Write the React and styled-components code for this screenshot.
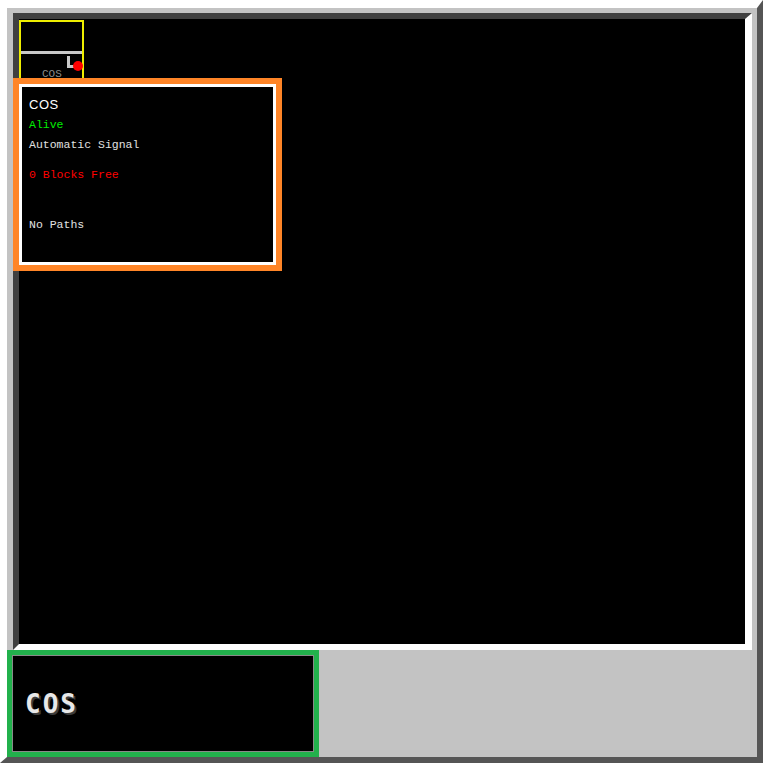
import React from 'react';
import styled, {createGlobalStyle} from 'styled-components';

const Global = createGlobalStyle`
	html, body {
		margin: 0;
		padding: 0;
		background: #ffffff;
	}
`;

const Window = styled.div`
	width: 763px;
	height: 763px;
	box-sizing: border-box;
	border-top: 8px solid #ffffff;
	border-left: 7px solid #ffffff;
	border-right: 6px solid #555555;
	border-bottom: 6px solid #555555;
	background: #c3c3c3;
	display: flex;
	flex-direction: column;
`;

const Top = styled.div`
	padding: 5px 5px 0 6px;
`;

const Sunken = styled.div`
	width: 739px;
	height: 637px;
	box-sizing: border-box;
	border-top: 6px solid #404040;
	border-left: 6px solid #404040;
	border-right: 7px solid #ffffff;
	border-bottom: 6px solid #ffffff;
`;

const Canvas = styled.div`
	position: relative;
	width: 100%;
	height: 100%;
	background: #000000;
`;

// signal node on the track diagram
const Node = styled.div`
	position: absolute;
	left: 0;
	top: 1px;
	width: 65px;
	height: 62px;
	box-sizing: border-box;
	border: 2px solid #eeee00;
	display: flex;
	flex-direction: column;
	padding-top: 29px;
`;

const Track = styled.div`
	height: 3px;
	background: #c8c8c8;
`;

const Head = styled.div`
	display: flex;
	justify-content: flex-end;
	align-items: flex-end;
	padding-top: 2px;
	height: 12px;
`;

const Lamp = styled.div`
	width: 8px;
	height: 12px;
	box-sizing: border-box;
	border-left: 3px solid #c8c8c8;
	border-bottom: 3px solid #c8c8c8;
`;

const Dot = styled.div`
	width: 10px;
	height: 10px;
	margin: 0 -1px -3px -2px;
	border-radius: 50%;
	background: #ff0000;
`;

const NodeLabel = styled.div`
	padding-left: 21px;
	font-family: "Liberation Mono", monospace;
	font-size: 11px;
	line-height: 12px;
	color: #8c8c8c;
`;

const Popup = styled.div`
	position: absolute;
	left: -6px;
	top: 59px;
	width: 269px;
	height: 193px;
	box-sizing: border-box;
	border: 6px solid #ff8527;
	z-index: 2;
`;

const PopupInner = styled.div`
	height: 100%;
	box-sizing: border-box;
	border: 3px solid #ffffff;
	background: #000000;
	padding: 8px 0 0 7px;
`;

const Title = styled.div`
	font-family: "Liberation Sans", Arial, sans-serif;
	font-size: 13px;
	letter-spacing: 0.5px;
	line-height: 20px;
	color: #ffffff;
`;

const Line = styled.div`
	font-family: "Liberation Mono", monospace;
	font-size: 11.5px;
	line-height: 20px;
	color: ${p => p.color || '#e0e0e0'};
	margin-top: ${p => p.gap || 0}px;
`;

const Bottom = styled.div`
	display: flex;
	height: 107px;
`;

const Status = styled.div`
	width: 312px;
	height: 107px;
	box-sizing: border-box;
	border: 5px solid #22b14c;
`;

const StatusInner = styled.div`
	height: 100%;
	box-sizing: border-box;
	border: 1px solid #8a8a8a;
	background: #000000;
	display: flex;
	align-items: center;
	padding-left: 12px;
`;

const StatusName = styled.div`
	font-family: "DejaVu Sans Mono", monospace;
	font-size: 26px;
	font-weight: bold;
	letter-spacing: 2px;
	color: #e8e8e8;
	text-shadow: 2px 2px 0 #3c3c3c;
`;

export default function App(){
	return (
		<>
		<Global />
		<Window>
			<Top>
				<Sunken>
					<Canvas>
						<Node>
							<Track />
							<Head>
								<Lamp />
								<Dot />
							</Head>
							<NodeLabel>COS</NodeLabel>
						</Node>
						<Popup>
							<PopupInner>
								<Title>COS</Title>
								<Line color="#00ee00">Alive</Line>
								<Line>Automatic Signal</Line>
								<Line color="#ff0000" gap={10}>0 Blocks Free</Line>
								<Line gap={30}>No Paths</Line>
							</PopupInner>
						</Popup>
					</Canvas>
				</Sunken>
			</Top>
			<Bottom>
				<Status>
					<StatusInner>
						<StatusName>COS</StatusName>
					</StatusInner>
				</Status>
			</Bottom>
		</Window>
		</>
	)
}
